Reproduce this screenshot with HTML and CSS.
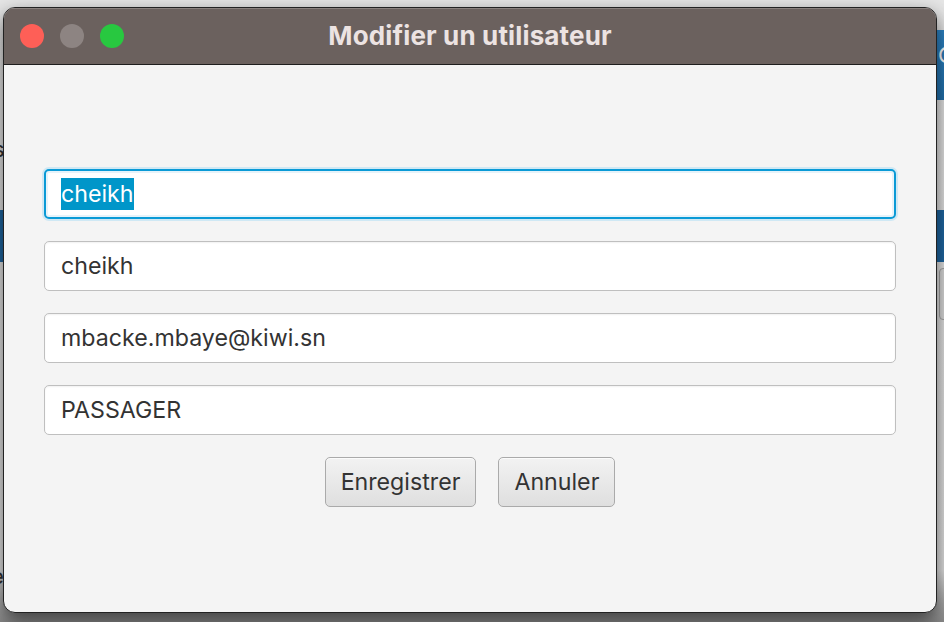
FILE: index.html
```html
<!DOCTYPE html>
<html lang="fr">
<head>
<meta charset="utf-8">
<title>Modifier un utilisateur</title>
<link rel="stylesheet" href="styles.css">
</head>
<body>
<div class="desktop">
  <div class="bg-left-text">s</div>
  <div class="bg-left-bar"></div>
  <div class="bg-right-top"><span>C</span></div>
  <div class="bg-right-bar"></div>
  <div class="bg-right-btn"></div>
  <div class="bg-left-bottom">e</div>

  <div class="window">
    <div class="titlebar">
      <div class="lights">
        <span class="light red"></span>
        <span class="light gray"></span>
        <span class="light green"></span>
      </div>
      <div class="title">Modifier un utilisateur</div>
    </div>
    <div class="content">
      <div class="field focused"><span class="sel">cheikh</span></div>
      <div class="field">cheikh</div>
      <div class="field">mbacke.mbaye@kiwi.sn</div>
      <div class="field">PASSAGER</div>
      <div class="actions">
        <button class="btn">Enregistrer</button>
        <button class="btn">Annuler</button>
      </div>
    </div>
  </div>
</div>
</body>
</html>
```
FILE: styles.css
```css
* { box-sizing: border-box; }
html, body {
  margin: 0;
  padding: 0;
  width: 944px;
  height: 622px;
  overflow: hidden;
}
body {
  background: linear-gradient(to bottom, #e6e6e6 0, #e2e2e2 570px, #8a8a8a 622px);
  font-family: Inter, "Liberation Sans", sans-serif;
}
.desktop {
  position: relative;
  width: 944px;
  height: 622px;
  padding: 7px 0 0 3px;
}
.bg-left-text {
  position: absolute;
  left: -7px;
  top: 136px;
  font-size: 22px;
  color: #333;
}
.bg-left-bottom {
  position: absolute;
  left: -9px;
  top: 563px;
  font-size: 22px;
  color: #333;
}
.bg-left-bar {
  position: absolute;
  left: 0;
  top: 210px;
  width: 4px;
  height: 52px;
  background: #1f67a3;
}
.bg-right-top {
  position: absolute;
  left: 936px;
  top: 30px;
  width: 8px;
  height: 70px;
  background: linear-gradient(to bottom, #2e86c8, #2271ad);
  overflow: hidden;
}
.bg-right-top span {
  position: absolute;
  left: 2px;
  top: 14px;
  font-size: 22px;
  color: #fff;
  line-height: 1;
}
.bg-right-bar {
  position: absolute;
  left: 936px;
  top: 210px;
  width: 8px;
  height: 52px;
  background: #1f67a3;
}
.bg-right-btn {
  position: absolute;
  left: 939px;
  top: 268px;
  width: 12px;
  height: 52px;
  border: 1px solid #a8a8a8;
  border-radius: 4px;
  background: #dcdcdc;
}
.window {
  position: relative;
  width: 934px;
  height: 606px;
  border: 1px solid #222;
  border-radius: 12px;
  background: #f4f4f4;
  overflow: hidden;
  box-shadow: 0 8px 20px rgba(0, 0, 0, 0.6);
  display: flex;
  flex-direction: column;
}
.titlebar {
  position: relative;
  height: 57px;
  flex: none;
  background: #6b615e;
  border-top: 1px solid #8a817e;
  border-bottom: 1px solid #1e1e1e;
  display: flex;
  align-items: center;
  justify-content: center;
}
.lights {
  position: absolute;
  left: 16px;
  top: 15px;
  display: flex;
  gap: 16px;
}
.light {
  width: 24px;
  height: 24px;
  border-radius: 50%;
  display: block;
}
.red { background: #fe5f57; }
.gray { background: #8d8482; }
.green { background: #28c840; }
.title {
  color: #ece3e2;
  font-weight: 700;
  font-size: 26px;
  letter-spacing: 0.15px;
  margin-top: -2px;
}
.content {
  flex: 1;
  padding: 104px 40px 0 40px;
  display: flex;
  flex-direction: column;
  gap: 22px;
}
.field {
  height: 50px;
  background: #fff;
  border: 1px solid #bfbfbf;
  border-radius: 5px;
  padding: 0 16px;
  display: flex;
  align-items: center;
  font-size: 23.2px;
  color: #333;
  box-shadow: inset 0 1px 2px rgba(0,0,0,0.06);
}
.field.focused {
  border: 2px solid #0a9ad6;
  padding: 0 15px;
  box-shadow: 0 0 0 2px #cfe8f4, inset 0 0 0 2px #e6f3fa;
}
.sel {
  background: #0096c9;
  color: #fff;
  padding: 3px 0 3px 0;
  line-height: 26px;
}
.actions {
  display: flex;
  justify-content: center;
  gap: 22px;
  margin-top: 0;
}
.btn {
  height: 50px;
  padding: 0 15px;
  font-family: Inter, "Liberation Sans", sans-serif;
  font-size: 23.2px;
  color: #333;
  background: linear-gradient(to bottom, #f2f2f2, #dfdfdf);
  border: 1px solid #aaaaaa;
  border-radius: 5px;
  box-shadow: inset 0 1px 0 #fbfbfb;
}
```
